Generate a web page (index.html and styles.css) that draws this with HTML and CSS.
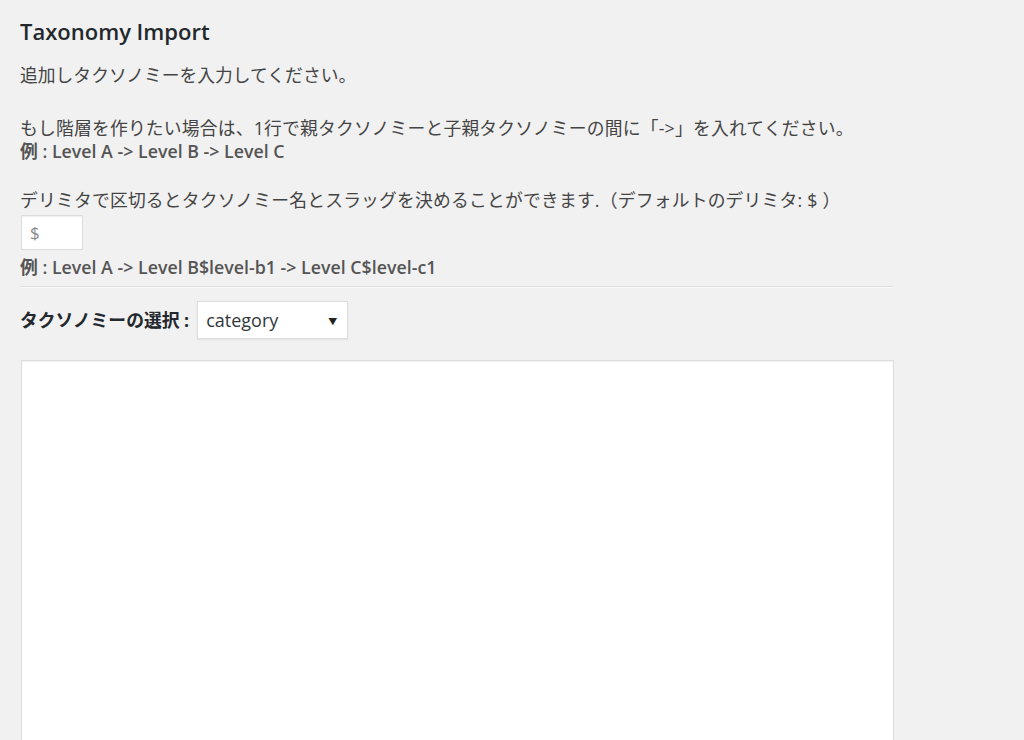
FILE: index.html
```html
<!DOCTYPE html>
<html lang="ja">
<head>
    <meta charset="UTF-8">
    <meta name="viewport" content="width=device-width, initial-scale=1.0">
    <title>Taxonomy Import</title>
    <link rel="stylesheet" href="styles.css">
</head>
<body>
    <div class="wrap">
        <h1>Taxonomy Import</h1>

        <p class="intro">追加しタクソノミーを入力してください。</p>

        <p class="note">もし階層を作りたい場合は、1行で親タクソノミーと子親タクソノミーの間に「-&gt;」を入れてください。<br>
            <span class="example">例 : Level A -&gt; Level B -&gt; Level C</span></p>

        <div class="delimiter">
            <label for="delimiter">デリミタで区切るとタクソノミー名とスラッグを決めることができます.（デフォルトのデリミタ: $ ）</label>
            <input type="text" id="delimiter" class="small-text" placeholder="$">
            <span class="example">例 : Level A -&gt; Level B$level-b1 -&gt; Level C$level-c1</span>
        </div>

        <hr>

        <div class="select-row">
            <label for="taxonomy">タクソノミーの選択 :</label>
            <div class="select-box">
                <select id="taxonomy">
                    <option>category</option>
                    <option>post_tag</option>
                </select>
                <span class="arrow">▼</span>
            </div>
        </div>

        <textarea id="terms"></textarea>
    </div>
</body>
</html>
```

FILE: styles.css
```css
body {
    margin: 0;
    background-color: #f1f1f1;
    color: #444;
    font-family: "Open Sans", "Noto Sans CJK JP", sans-serif;
    font-size: 17.8px;
    line-height: 23px;
}

.wrap {
    width: 873px;
    padding: 0 20px;
}

h1 {
    margin: 18px 0 0;
    font-size: 22px;
    line-height: 26px;
    font-weight: 600;
    color: #23282d;
}

.intro {
    margin: 20px 0 0;
}

.note {
    margin: 30px 0 0;
    letter-spacing: 0.2px;
}

.note .example {
    letter-spacing: 0;
}

.example {
    font-weight: 600;
    color: #555;
}

.delimiter {
    margin-top: 26px;
}

.delimiter label {
    display: block;
    letter-spacing: 0.2px;
}

.small-text {
    display: block;
    width: 62px;
    height: 35px;
    margin: 3px 0 6px 1px;
    padding: 0 8px;
    box-sizing: border-box;
    border: 1px solid #ddd;
    box-shadow: inset 0 1px 2px rgba(0, 0, 0, 0.07);
    background-color: #fff;
    font-family: "Open Sans", sans-serif;
    font-size: 17px;
    color: #444;
}

.small-text::placeholder {
    color: #888;
}

.delimiter .example {
    display: block;
}

hr {
    margin: 7px 0 0;
    border: 0;
    border-top: 1px solid #ddd;
    border-bottom: 1px solid #fafafa;
}

.select-row {
    display: flex;
    align-items: center;
    gap: 8px;
    margin-top: 13px;
}

.select-row label {
    font-weight: 700;
    color: #23282d;
}

.select-box {
    position: relative;
    width: 151px;
    height: 38px;
}

.select-box select {
    width: 100%;
    height: 100%;
    padding: 0 8px;
    border: 1px solid #ddd;
    box-shadow: 0 1px 2px rgba(0, 0, 0, 0.07);
    background-color: #fff;
    font-family: "Open Sans", sans-serif;
    font-size: 18px;
    color: #32373c;
    appearance: none;
    -webkit-appearance: none;
}

.arrow {
    position: absolute;
    right: 11px;
    top: 9px;
    font-size: 9px;
    color: #222;
    pointer-events: none;
}

textarea {
    display: block;
    width: 873px;
    height: 420px;
    margin: 21px 0 0 1px;
    box-sizing: border-box;
    border: 1px solid #ddd;
    box-shadow: inset 0 1px 2px rgba(0, 0, 0, 0.07);
    background-color: #fff;
    resize: none;
}
```
